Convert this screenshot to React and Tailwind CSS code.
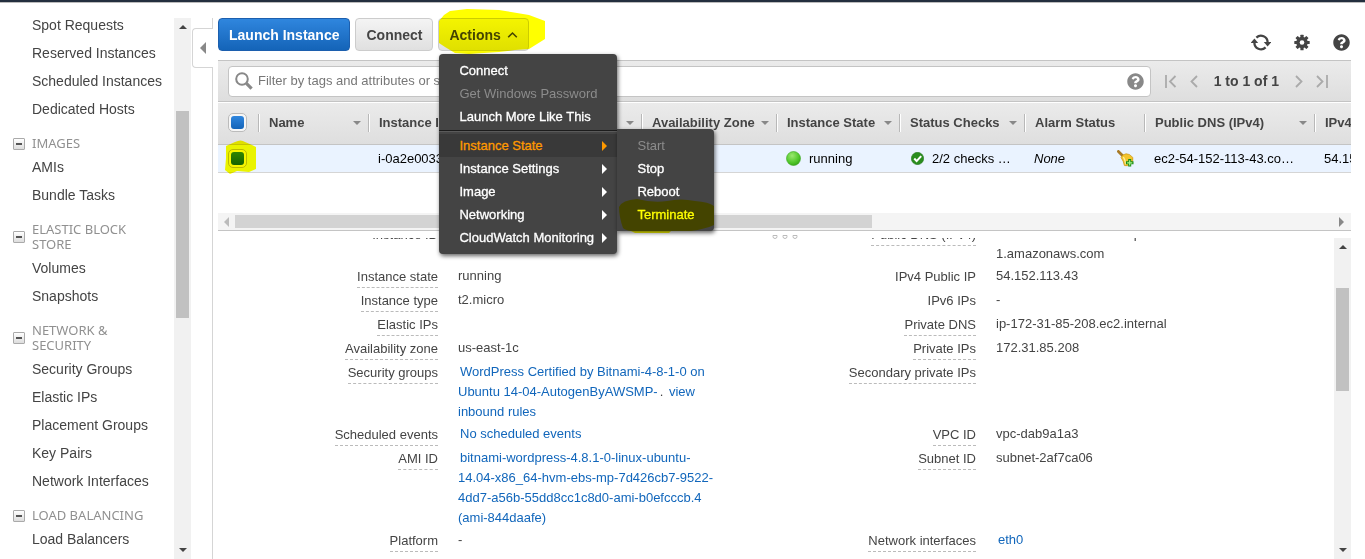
import React from "react";
import { FaQuestionCircle } from "react-icons/fa";

const NAV = [
  { items: ["Spot Requests", "Reserved Instances", "Scheduled Instances", "Dedicated Hosts"] },
  { title: "IMAGES", items: ["AMIs", "Bundle Tasks"] },
  { title: "ELASTIC BLOCK STORE", items: ["Volumes", "Snapshots"] },
  {
    title: "NETWORK & SECURITY",
    items: ["Security Groups", "Elastic IPs", "Placement Groups", "Key Pairs", "Network Interfaces"],
  },
  { title: "LOAD BALANCING", items: ["Load Balancers"] },
];

function Triangle({ dir, className }) {
  const points = {
    up: "0,5 4,1 8,5",
    down: "0,1 8,1 4,5",
  };
  const side = {
    left: "5,0 5,10 0,5",
    right: "0,0 0,10 5,5",
  };
  if (points[dir]) {
    return (
      <svg className={className} width="8" height="6" viewBox="0 0 8 6" fill="currentColor" aria-hidden="true">
        <polygon points={points[dir]} />
      </svg>
    );
  }
  return (
    <svg className={className} width="5" height="10" viewBox="0 0 5 10" fill="currentColor" aria-hidden="true">
      <polygon points={side[dir]} />
    </svg>
  );
}

function Marker({ className, path, width, height }) {
  return (
    <svg
      className={`pointer-events-none absolute mix-blend-multiply ${className}`}
      width={width}
      height={height}
      viewBox={`0 0 ${width} ${height}`}
      fill="#ffff00"
      aria-hidden="true"
    >
      <path d={path} />
    </svg>
  );
}

function Sidebar() {
  return (
    <div className="flex w-48 shrink-0">
      <nav className="min-w-0 flex-1 overflow-hidden pt-2">
        {NAV.map((group, i) => (
          <section key={i}>
            {group.title && (
              <h2 className="mt-[13px] mb-0.5 flex items-center pl-[13px] font-['Noto_Sans',sans-serif] text-[13px] leading-[15px] text-[#909090]">
                <button
                  type="button"
                  aria-label={`Collapse ${group.title}`}
                  className="mr-[7px] flex size-3 shrink-0 items-center justify-center rounded-[1px] border border-[#aaa] bg-linear-to-b from-white to-[#ddd]"
                >
                  <span className="h-0.5 w-1.5 bg-[#555]" />
                </button>
                <span className="max-w-32">{group.title}</span>
              </h2>
            )}
            <ul>
              {group.items.map((item) => (
                <li key={item} className="h-7 pl-8 text-sm leading-7 whitespace-nowrap">
                  <a href="#">{item}</a>
                </li>
              ))}
            </ul>
          </section>
        ))}
      </nav>
      <div className="mt-[15px] mr-px flex w-[17px] flex-col items-center bg-[#f1f1f1] text-[#444]">
        <Triangle dir="up" className="my-1.5 shrink-0" />
        <div className="flex w-full flex-1 flex-col px-0.5 pt-[75px]">
          <div className="h-[207px] w-full bg-[#c1c1c1]" />
        </div>
        <Triangle dir="down" className="my-1.5 shrink-0" />
      </div>
    </div>
  );
}

function CollapseHandle() {
  return (
    <div className="mt-[15px] flex w-[21px] shrink-0 flex-col">
      <div className="h-2.5 border-r border-[#d5d5d5]" />
      <button
        type="button"
        aria-label="Collapse navigation"
        className="flex h-10 items-center rounded-l border-y border-l border-[#d5d5d5] pl-[7px] text-[#888]"
      >
        <svg width="6" height="12" viewBox="0 0 6 12" fill="currentColor" aria-hidden="true">
          <polygon points="6,0 6,12 0,6" />
        </svg>
      </button>
      <div className="flex-1 border-r border-[#d5d5d5]" />
    </div>
  );
}

const MENU_TOP = [
  { label: "Connect" },
  { label: "Get Windows Password", off: true },
  { label: "Launch More Like This" },
];
const MENU_MORE = ["Instance Settings", "Image", "Networking", "CloudWatch Monitoring"];
const STATES = [{ label: "Start", off: true }, { label: "Stop" }, { label: "Reboot" }, { label: "Terminate" }];

function MenuItem({ label, off, arrow, active }) {
  return (
    <button
      type="button"
      role="menuitem"
      disabled={off}
      className={`flex h-[23px] w-full items-center justify-between pr-2.5 pl-5 text-left text-[13px] whitespace-nowrap ${
        active ? "bg-[#393939] text-[#ff9900]" : off ? "text-[#8c8c8c]" : "text-white"
      } ${off ? "" : "[-webkit-text-stroke:0.3px_currentColor]"}`}
    >
      {label}
      {arrow && <Triangle dir="right" />}
    </button>
  );
}

function ActionsMenu() {
  return (
    <div role="menu" className="absolute top-9 left-px z-20 w-[178px] rounded bg-[#444] py-[5px] shadow-[1px_2px_4px_rgba(0,0,0,0.6)]">
      {MENU_TOP.map((m) => (
        <MenuItem key={m.label} {...m} />
      ))}
      <div className="my-0.5 h-0.5 border-t border-[#1c1c1c] bg-[#5a5a5a]" />
      <div className="relative">
        <MenuItem label="Instance State" arrow active />
        <div role="menu" className="absolute -top-[5px] left-full isolate w-[97px] rounded-r bg-[#444] py-[5px] shadow-[1px_2px_4px_rgba(0,0,0,0.6)]">
          {STATES.map((m) => (
            <MenuItem key={m.label} {...m} />
          ))}
          <Marker
            className="top-[70px] left-0.5"
            width={95}
            height={36}
            path="M0,8 Q3,1 18,0 Q34,4 48,2 Q62,-1 76,2 Q90,3 95,7 L95,26 Q86,30 72,32 L52,32 L50,34 L16,34 L12,32 Q6,31 4,29 Q0,18 0,8 Z"
          />
        </div>
      </div>
      {MENU_MORE.map((label) => (
        <MenuItem key={label} label={label} arrow />
      ))}
    </div>
  );
}

function RefreshIcon() {
  return (
    <svg width="20" height="17" viewBox="0 0 20 17" aria-hidden="true">
      <g fill="none" stroke="#444" strokeWidth="2.3">
        <path d="M5.4 3.6 A6.6 6.6 0 0 1 16.6 8.4" />
        <path d="M14.6 13.4 A6.6 6.6 0 0 1 3.4 8.6" />
      </g>
      <g fill="#444">
        <path d="M12.8 8 L20.4 8 L16.6 12.4 Z" />
        <path d="M-0.4 9 L7.2 9 L3.4 4.6 Z" />
      </g>
    </svg>
  );
}

function GearIcon() {
  return (
    <svg width="16" height="17" viewBox="-8 -8.5 16 17" fill="#444" aria-hidden="true">
      {[0, 45, 90, 135].map((angle) => (
        <rect key={angle} x="-1.6" y="-7.7" width="3.2" height="15.4" rx="0.5" transform={`rotate(${angle})`} />
      ))}
      <circle r="5.7" />
      <circle r="2.3" fill="#fff" />
    </svg>
  );
}

function Toolbar() {
  const plain =
    "h-[33px] rounded border border-[#ccc] bg-linear-to-b from-[#f4f4f4] to-[#e0e0e0] text-sm font-bold text-[#444]";
  return (
    <div className="flex items-end justify-between pt-[15px] pb-[9px]">
      <div className="flex gap-[5px]">
        <button
          type="button"
          className="h-[33px] rounded border border-[#1c5fae] bg-linear-to-b from-[#2f86de] to-[#1464b8] px-2.5 text-sm font-bold whitespace-nowrap text-white"
        >
          Launch Instance
        </button>
        <button type="button" className={`px-2.5 ${plain}`}>
          Connect
        </button>
        <div className="relative">
          <button type="button" aria-haspopup="menu" className={`flex items-center gap-1.5 px-2.5 ${plain}`}>
            Actions
            <svg width="11" height="8" viewBox="0 0 11 8" fill="none" stroke="#444" strokeWidth="1.6" aria-hidden="true">
              <path d="M1.2 6.2 L5.5 2 L9.8 6.2" />
            </svg>
          </button>
          <Marker
            className="-top-[9px] left-px"
            width={106}
            height={45}
            path="M0,12 L5,6 L11,2 L28,0 L60,1 L84,5 L90,6 L106,12 L106,30 L90,40 L76,41 L60,43 L30,45 L16,44 L6,38 L0,34 Z"
          />
          <ActionsMenu />
        </div>
      </div>
      <div className="flex gap-[23px] pr-px text-[#444]">
        <button type="button" aria-label="Refresh">
          <RefreshIcon />
        </button>
        <button type="button" aria-label="Settings">
          <GearIcon />
        </button>
        <button type="button" aria-label="Help">
          <FaQuestionCircle size={17} />
        </button>
      </div>
    </div>
  );
}

function PagerIcon({ path, width, label }) {
  return (
    <button type="button" aria-label={label} className="text-[#aaa]">
      <svg width={width} height="13" viewBox={`0 0 ${width} 13`} fill="none" stroke="currentColor" strokeWidth="1.8" aria-hidden="true">
        <path d={path} />
      </svg>
    </button>
  );
}

function FilterBar() {
  return (
    <div className="flex h-[42px] items-center border-y border-[#c4c4c4] bg-linear-to-b from-[#ebebeb] to-[#dedede] pr-[23px] pl-2.5">
      <label className="flex h-[31px] min-w-0 flex-1 items-center rounded border border-[#c4c4c4] bg-white pr-1.5 pl-1.5">
        <svg width="18" height="18" viewBox="0 0 18 18" fill="none" stroke="#888" aria-hidden="true">
          <circle cx="7" cy="7" r="5.8" strokeWidth="2" />
          <path d="M11.4 11.4 L16.6 16.6" strokeWidth="3.2" />
        </svg>
        <input
          type="text"
          aria-label="Filter instances"
          placeholder="Filter by tags and attributes or search by keyword"
          className="ml-[5px] min-w-0 flex-1 text-[13px] outline-none placeholder:text-[#777]"
        />
        <FaQuestionCircle size={17} className="text-[#888]" />
      </label>
      <div className="ml-3.5 flex items-center text-sm font-bold whitespace-nowrap">
        <PagerIcon label="First page" width={12} path="M1 0 V13 M10.5 1 L5 6.5 L10.5 12" />
        <span className="ml-[13px] flex">
          <PagerIcon label="Previous page" width={8} path="M7 1 L1.5 6.5 L7 12" />
        </span>
        <span className="mx-4">1 to 1 of 1</span>
        <PagerIcon label="Next page" width={8} path="M1 1 L6.5 6.5 L1 12" />
        <span className="ml-[13px] flex">
          <PagerIcon label="Last page" width={12} path="M1 1 L6.5 6.5 L1 12 M11 0 V13" />
        </span>
      </div>
    </div>
  );
}

function Checkbox({ label }) {
  return (
    <span className="relative flex size-[19px] items-center justify-center rounded-[5px] border border-[#bbb] bg-[#f6f6f6]">
      <input
        type="checkbox"
        defaultChecked
        aria-label={label}
        className="size-[13px] appearance-none rounded-[3px] bg-linear-to-b from-[#2f86de] to-[#1464b8]"
      />
    </span>
  );
}

const COLUMNS = [
  { label: "Name", width: "w-[110px]", sort: true },
  { label: "Instance ID", width: "w-[137px]", sort: true },
  { label: "Instance Type", width: "w-[136px]", sort: true },
  { label: "Availability Zone", width: "w-[135px]", sort: true },
  { label: "Instance State", width: "w-[123px]", sort: true },
  { label: "Status Checks", width: "w-[125px]", sort: true },
  { label: "Alarm Status", width: "w-[120px]" },
  { label: "Public DNS (IPv4)", width: "w-[170px]", sort: true },
  { label: "IPv4 Public IP", width: "" },
];

function BellIcon() {
  return (
    <svg width="17" height="17" viewBox="0 0 17 17" aria-hidden="true">
      <path d="M1.4 1.4 L5.4 5.4" stroke="#a87a26" strokeWidth="2.8" strokeLinecap="round" />
      <path d="M4 7.4 Q5.4 4.4 9 3.8 Q12.4 3.4 15.8 7.4 Q16.8 11 13.4 14 Q10.4 16.6 7.4 15.6 Q6.6 11 4 7.4 Z" fill="#f4c52c" stroke="#c99416" strokeWidth="0.7" />
      <path d="M6.4 7 Q8.4 10.4 8.8 14.4" stroke="#fff0a0" strokeWidth="1.4" fill="none" />
      <path d="M11.2 9 h3 v2.3 h2.3 v3 h-2.3 v2.3 h-3 v-2.3 h-2.3 v-3 h2.3 Z" fill="#1c8a12" />
      <path d="M12.7 10.2 V15.4 M10.1 12.8 H15.3" stroke="#a5f58a" strokeWidth="1.2" />
    </svg>
  );
}

function InstanceTable() {
  const cell = "overflow-hidden p-0 pl-2.5 text-left whitespace-nowrap";
  const head = "border-t border-b border-t-white border-b-[#c4c4c4] p-0 pb-0.5";
  return (
    <div className="overflow-hidden">
      <table className="w-full table-fixed border-separate border-spacing-0 text-[13px]">
        <thead>
          <tr className="h-[43px] bg-linear-to-b from-[#ebebeb] to-[#dedede]">
            <th className={`w-10 pl-2.5 ${head}`}>
              <Checkbox label="Select all" />
            </th>
            {COLUMNS.map((c) => (
              <th key={c.label} className={`${head} ${c.width}`}>
                <div className="flex h-[18px] items-center justify-between overflow-hidden border-l border-[#b8b8b8] pr-[7px] pl-2.5 shadow-[inset_1px_0_0_#fff] whitespace-nowrap">
                  {c.label}
                  {c.sort && <Triangle dir="down" className="shrink-0 text-[#888]" />}
                </div>
              </th>
            ))}
          </tr>
        </thead>
        <tbody>
          <tr className="h-7 bg-[#eaf3ff] text-black [&>td]:border-b [&>td]:border-[#d5d5d5]">
            <td className="relative p-0 pl-2.5">
              <Checkbox label="Select instance i-0a2e0033" />
              <Marker
                className="-top-[5px] left-[7px]"
                width={31}
                height={34}
                path="M1,6 L10,2 Q16,-1 20,2 L27,5 L31,7 L31,29 L24,32 L12,31 L5,34 L0,30 L1,18 Z"
              />
            </td>
            <td className={cell} />
            <td className={cell}>i-0a2e0033</td>
            <td className={cell}>t2.micro</td>
            <td className={cell}>us-east-1c</td>
            <td className={cell}>
              <span className="flex items-center gap-2">
                <svg width="15" height="15" viewBox="0 0 15 15" aria-hidden="true">
                  <defs>
                    <radialGradient id="dot" cx="0.4" cy="0.3" r="0.8">
                      <stop offset="0" stopColor="#9be870" />
                      <stop offset="0.6" stopColor="#52c82c" />
                      <stop offset="1" stopColor="#2f9e14" />
                    </radialGradient>
                  </defs>
                  <circle cx="7.5" cy="7.5" r="7" fill="url(#dot)" stroke="#3ba81e" strokeWidth="0.6" />
                </svg>
                running
              </span>
            </td>
            <td className={cell}>
              <span className="flex items-center gap-2">
                <svg className="ml-0.5" width="13" height="13" viewBox="0 0 12 12" aria-hidden="true">
                  <circle cx="6" cy="6" r="5.7" fill="#2a8d1e" stroke="#1d6f14" strokeWidth="0.5" />
                  <path d="M3 6 L5.2 8.4 L9.4 3.8" stroke="#fff" strokeWidth="1.9" fill="none" />
                </svg>
                2/2 checks …
              </span>
            </td>
            <td className={cell}>
              <span className="flex items-center justify-between pr-2.5">
                <em>None</em>
                <BellIcon />
              </span>
            </td>
            <td className={cell}>ec2-54-152-113-43.co…</td>
            <td className={cell}>54.152.113.43</td>
          </tr>
        </tbody>
      </table>
      <div className="mt-10 flex h-[18px] items-center border-b border-[#c4c4c4] bg-[#f4f4f4] text-[#888]">
        <Triangle dir="left" className="ml-1.5 shrink-0 text-[#bbb]" />
        <div className="mx-1.5 h-[13px] flex-1">
          <div className="h-full w-[58%] bg-[#d3d3d3]" />
        </div>
        <Triangle dir="right" className="mr-[7px] shrink-0" />
      </div>
    </div>
  );
}

function Link({ children }) {
  return (
    <a href="#" className="pl-0.5 text-[#1166bb]">
      {children}
    </a>
  );
}

const DETAILS = [
  ["Instance ID", "i-0a2e0033", "Public DNS (IPv4)", "ec2-54-152-113-43.compute-1.amazonaws.com"],
  ["Instance state", "running", "IPv4 Public IP", "54.152.113.43"],
  ["Instance type", "t2.micro", "IPv6 IPs", "-"],
  ["Elastic IPs", "", "Private DNS", "ip-172-31-85-208.ec2.internal"],
  ["Availability zone", "us-east-1c", "Private IPs", "172.31.85.208"],
  [
    "Security groups",
    <>
      <Link>WordPress Certified by Bitnami-4-8-1-0 on Ubuntu 14-04-AutogenByAWSMP-</Link>
      <span className="ml-0.5">.</span> <Link>view inbound rules</Link>
    </>,
    "Secondary private IPs",
    "",
  ],
  ["Scheduled events", <Link>No scheduled events</Link>, "VPC ID", "vpc-dab9a1a3"],
  [
    "AMI ID",
    <Link>bitnami-wordpress-4.8.1-0-linux-ubuntu-14.04-x86_64-hvm-ebs-mp-7d426cb7-9522-4dd7-a56b-55dd8cc1c8d0-ami-b0efcccb.4 (ami-844daafe)</Link>,
    "Subnet ID",
    "subnet-2af7ca06",
  ],
  ["Platform", "-", "Network interfaces", <Link>eth0</Link>],
  ["IAM role", "-", "Source/dest. check", "True"],
];
const PLAIN_LABELS = ["Instance ID", "IPv4 Public IP", "IPv6 IPs"];

function DetailLabel({ text }) {
  const rule = PLAIN_LABELS.includes(text) ? "border-transparent" : "border-[#bbb]";
  return (
    <dt className="min-h-6 text-right">
      <span className={`inline-block border-b border-dashed pt-0.5 align-top ${rule}`}>{text}</span>
    </dt>
  );
}

function Details() {
  return (
    <div className="mt-[7px] flex min-h-0 flex-1">
      <div className="min-w-0 flex-1 overflow-hidden">
        <dl className="-mt-[15px] grid grid-cols-[220fr_278fr_260fr_358fr] text-[13px] leading-5">
          {DETAILS.map(([a, b, c, d]) => (
            <React.Fragment key={a}>
              <DetailLabel text={a} />
              <dd className="py-px pl-5">{b}</dd>
              <DetailLabel text={c} />
              <dd className="py-px pr-24 pl-5">{d}</dd>
            </React.Fragment>
          ))}
        </dl>
      </div>
      <div className="flex w-[17px] shrink-0 flex-col items-center bg-[#f1f1f1] text-[#444]">
        <Triangle dir="up" className="my-1.5 shrink-0" />
        <div className="flex w-full flex-1 flex-col px-0.5 pt-8">
          <div className="h-[103px] w-full bg-[#c1c1c1]" />
        </div>
        <Triangle dir="down" className="my-1.5 shrink-0" />
      </div>
    </div>
  );
}

function Grip() {
  return (
    <div className="relative">
      <div className="absolute top-1 left-1/2 flex -translate-x-1/2 gap-[5px]">
        {[0, 1, 2].map((i) => (
          <span key={i} className="h-1 w-[5px] rounded-b border border-[#bbb]" />
        ))}
      </div>
    </div>
  );
}

export default function App() {
  return (
    <div className="flex h-screen flex-col overflow-hidden bg-white font-['Liberation_Sans',Arial,sans-serif] text-[#444]">
      <header className="h-[3px] shrink-0 border-b border-[#bbb] bg-[#232f3e]" />
      <div className="flex min-h-0 flex-1">
        <Sidebar />
        <CollapseHandle />
        <main className="mr-3.5 ml-[5px] flex min-w-0 flex-1 flex-col">
          <Toolbar />
          <FilterBar />
          <InstanceTable />
          <Grip />
          <Details />
        </main>
      </div>
    </div>
  );
}
